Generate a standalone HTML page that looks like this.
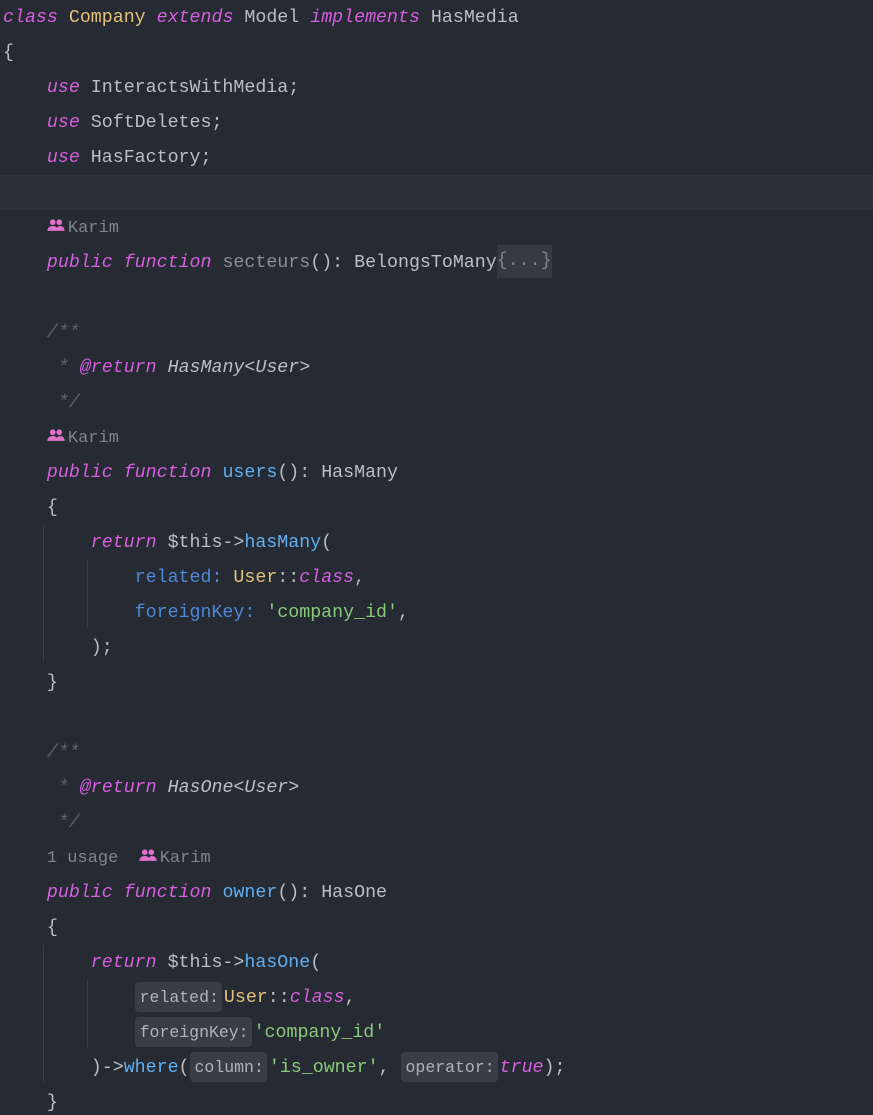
<!DOCTYPE html>
<html><head><meta charset="utf-8"><style>
html,body{margin:0;padding:0;background:#262a33;width:873px;height:1115px;overflow:hidden}
.c{position:relative;font-family:"Liberation Mono",monospace;font-size:18.3px;color:#bbbec4;}
.l{height:35px;line-height:37px;white-space:pre;padding-left:3px;position:relative}
.k{color:#d55fde;font-style:italic}
.y{color:#e5c07b}
.b{color:#61afef}
.g{color:#89ca78}
.p{color:#4e88d8}
.cm{color:#5c6370;font-style:italic}
.ck{color:#d55fde;font-style:italic}
.gr{color:#7f848e;font-size:17px}
.h{display:inline-block;background:#393d47;color:#aeb3bc;font-size:16.5px;line-height:31px;height:30px;padding:0 3px 0 5px;border-radius:4px;margin-right:2px;vertical-align:top;margin-top:2px}
.f{display:inline-block;background:#343944;color:#7f848e;height:33px;line-height:33px;vertical-align:top;position:relative;top:0px}
.hl{background:#2c313c}
.v{position:absolute;width:1px;background:#3a3e47}
.i{display:inline-block;width:18px;height:13px;vertical-align:middle;margin-right:3px;position:relative;top:-2px}
</style></head><body><div class="c">
<div class="v" style="left:43px;top:525px;height:137px"></div>
<div class="v" style="left:87px;top:560px;height:67px"></div>
<div class="v" style="left:43px;top:945px;height:137px"></div>
<div class="v" style="left:87px;top:980px;height:67px"></div>
<div class="l"><span class="k">class</span> <span class="y">Company</span> <span class="k">extends</span> Model <span class="k">implements</span> HasMedia</div>
<div class="l">{</div>
<div class="l">    <span class="k">use</span> InteractsWithMedia;</div>
<div class="l">    <span class="k">use</span> SoftDeletes;</div>
<div class="l">    <span class="k">use</span> HasFactory;</div>
<div class="l hl"> </div>
<div class="l">    <svg class="i" viewBox="0 0 16 12"><circle cx="5" cy="3" r="2.6" fill="#e06fce"/><circle cx="11" cy="3" r="2.6" fill="#e06fce"/><path d="M0 11c0-3 2.5-4.5 5-4.5s5 1.5 5 4.5zM8 11c0-2 1-3.5 3-4.5 3 0 5 1.5 5 4.5z" fill="#e06fce"/></svg><span class="gr">Karim</span></div>
<div class="l">    <span class="k">public</span> <span class="k">function</span> <span style="color:#8b9098">secteurs</span>(): BelongsToMany<span class="f">{...}</span></div>
<div class="l"> </div>
<div class="l">    <span class="cm">/**</span></div>
<div class="l">     <span class="cm">* </span><span class="ck">@return</span> <span style="font-style:italic;color:#bbbec4">HasMany&lt;User&gt;</span></div>
<div class="l">     <span class="cm">*/</span></div>
<div class="l">    <svg class="i" viewBox="0 0 16 12"><circle cx="5" cy="3" r="2.6" fill="#e06fce"/><circle cx="11" cy="3" r="2.6" fill="#e06fce"/><path d="M0 11c0-3 2.5-4.5 5-4.5s5 1.5 5 4.5zM8 11c0-2 1-3.5 3-4.5 3 0 5 1.5 5 4.5z" fill="#e06fce"/></svg><span class="gr">Karim</span></div>
<div class="l">    <span class="k">public</span> <span class="k">function</span> <span class="b">users</span>(): HasMany</div>
<div class="l">    {</div>
<div class="l">        <span class="k">return</span> $this-&gt;<span class="b">hasMany</span>(</div>
<div class="l">            <span class="p">related:</span> <span class="y">User</span>::<span class="k">class</span>,</div>
<div class="l">            <span class="p">foreignKey:</span> <span class="g">'company_id'</span>,</div>
<div class="l">        );</div>
<div class="l">    }</div>
<div class="l"> </div>
<div class="l">    <span class="cm">/**</span></div>
<div class="l">     <span class="cm">* </span><span class="ck">@return</span> <span style="font-style:italic;color:#bbbec4">HasOne&lt;User&gt;</span></div>
<div class="l">     <span class="cm">*/</span></div>
<div class="l">    <span class="gr">1 usage  </span><svg class="i" viewBox="0 0 16 12"><circle cx="5" cy="3" r="2.6" fill="#e06fce"/><circle cx="11" cy="3" r="2.6" fill="#e06fce"/><path d="M0 11c0-3 2.5-4.5 5-4.5s5 1.5 5 4.5zM8 11c0-2 1-3.5 3-4.5 3 0 5 1.5 5 4.5z" fill="#e06fce"/></svg><span class="gr">Karim</span></div>
<div class="l">    <span class="k">public</span> <span class="k">function</span> <span class="b">owner</span>(): HasOne</div>
<div class="l">    {</div>
<div class="l">        <span class="k">return</span> $this-&gt;<span class="b">hasOne</span>(</div>
<div class="l">            <span class="h">related:</span><span class="y">User</span>::<span class="k">class</span>,</div>
<div class="l">            <span class="h">foreignKey:</span><span class="g">'company_id'</span></div>
<div class="l">        )-&gt;<span class="b">where</span>(<span class="h">column:</span><span class="g">'is_owner'</span>, <span class="h">operator:</span><span class="k">true</span>);</div>
<div class="l">    }</div>
</div></body></html>
